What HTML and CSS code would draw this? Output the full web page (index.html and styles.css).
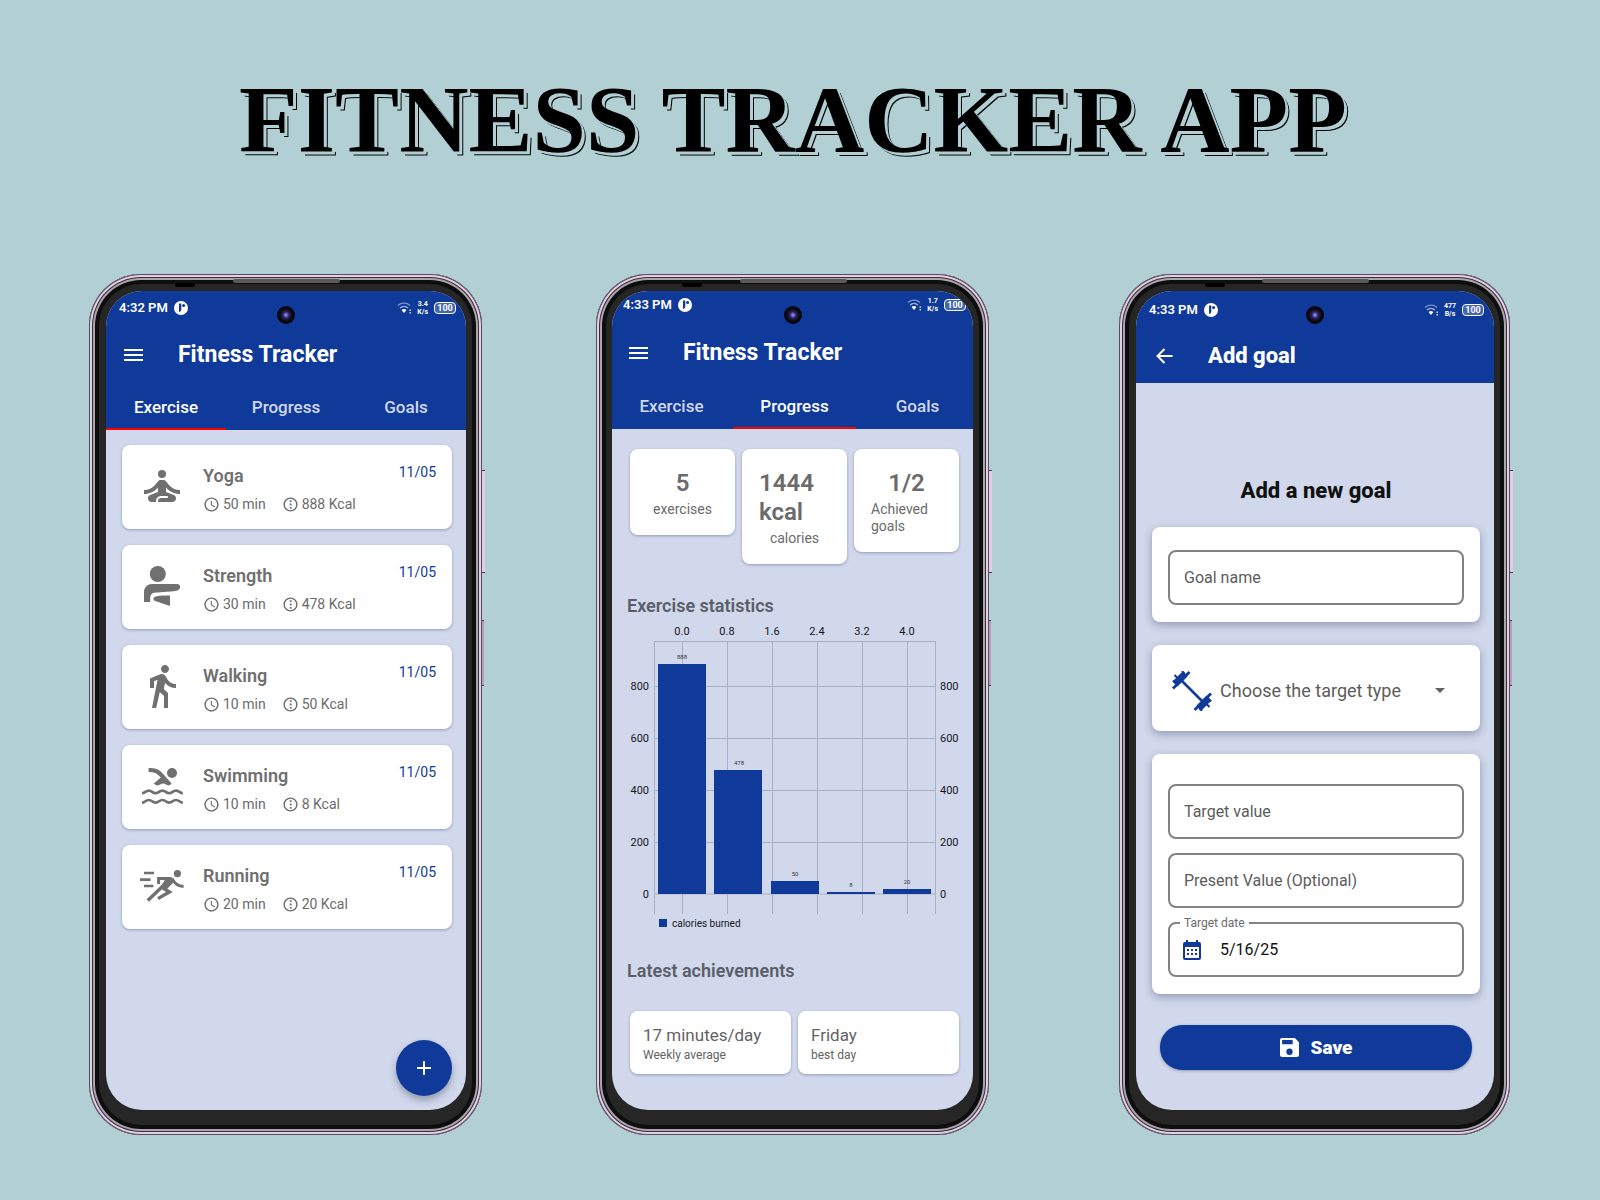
FILE: index.html
```html
<!DOCTYPE html>
<html lang="en">
<head>
<meta charset="utf-8">
<meta name="viewport" content="width=device-width, initial-scale=1">
<title>Fitness Tracker App</title>
<link rel="stylesheet" href="styles.css">
</head>
<body>
<svg class="sprite" aria-hidden="true">
  <symbol id="badge" viewBox="0 0 14 14"><circle cx="7" cy="7" r="7" fill="#fff"/><path d="M5 2.400h2.300v6.200A2.300 2.300 0 0 1 5 10.900z" fill="#103a9a"/><circle cx="9.600" cy="4.600" r="1.500" fill="#103a9a"/></symbol>
  <symbol id="wifi" viewBox="0 0 16 14"><g fill="none" stroke="#fff" stroke-width="1.3"><path d="M1 4.500a9 9 0 0 1 12 0" opacity=".45"/><path d="M3 7a6 6 0 0 1 8 0" opacity=".6"/></g><path d="M4.600 9a3.800 3.800 0 0 1 4.800 0L7 12z" fill="#fff"/><path d="M12.500 8.500h1.500v1.500h-1.500zM12.500 11h1.500v1.500h-1.500z" fill="#fff" opacity=".8"/></symbol>
  <symbol id="menu" viewBox="0 0 20 14"><path d="M0 1h19v2H0zM0 6h19v2H0zM0 11h19v2H0z" fill="#fff"/></symbol>
  <symbol id="clock" viewBox="0 0 24 24"><path fill="currentColor" d="M11.990 2C6.470 2 2 6.480 2 12s4.470 10 9.990 10C17.520 22 22 17.520 22 12S17.520 2 11.990 2zM12 20c-4.420 0-8-3.580-8-8s3.580-8 8-8 8 3.580 8 8-3.580 8-8 8zm.5-13H11v6l5.250 3.150.75-1.230-4.500-2.670z"/></symbol>
  <symbol id="energy" viewBox="0 0 24 24"><circle cx="12" cy="12" r="9" fill="none" stroke="currentColor" stroke-width="2"/><path fill="currentColor" d="M11 6h2.500v2.500H11zM11 10.700h2.500v2.600H11zM11 15.500h2.500V18H11z"/></symbol>
  <symbol id="yoga" viewBox="0 0 24 24"><circle cx="12" cy="6" r="2" fill="currentColor"/><path fill="currentColor" d="M21 16v-2c-2.240 0-4.160-.96-5.600-2.680l-1.340-1.600C13.680 9.260 13.120 9 12.530 9h-1.050c-.6 0-1.150.26-1.530.72l-1.340 1.600C7.160 13.040 5.240 14 3 14v2c2.770 0 5.190-1.170 7-3.250V15l-3.880 1.550C5.450 16.820 5 17.480 5 18.210 5 19.200 5.800 20 6.790 20H9v-.5c0-1.380 1.120-2.500 2.500-2.500h3c.28 0 .5.22.5.5s-.22.5-.5.5h-3c-.83 0-1.500.67-1.500 1.500v.5h7.100c.99 0 1.900-.8 1.900-1.790 0-.73-.45-1.390-1.120-1.660L14 15v-2.250c1.810 2.080 4.230 3.250 7 3.250z"/></symbol>
  <symbol id="strength" viewBox="0 0 24 24"><g fill="currentColor"><circle cx="9.900" cy="6" r="4"/><path d="M3 20v-5c0-2.300 1.800-4 4-4h12.500c2 0 2 2.700.3 3.200-1.500.4-8.800 1-10.800 1-2.200.1-2.900 1.300-2.900 3V20z"/><path d="M16 16.800V22l-7.700-2.600c-1-.7-.7-1.900.7-2.200 2-.4 5-.4 7-.4z"/></g></symbol>
  <symbol id="walking" viewBox="0 0 24 24"><path fill="currentColor" d="M13.500 5.500c1.100 0 2-.9 2-2s-.9-2-2-2-2 .9-2 2 .9 2 2 2zM9.800 8.900L7 23h2.100l1.800-8 2.100 2v6h2v-7.500l-2.100-2 .6-3C14.800 12 16.800 13 19 13v-2c-1.900 0-3.500-1-4.300-2.400l-1-1.600c-.4-.6-1-1-1.700-1-.3 0-.5.1-.8.1L6 8.300V13h2V9.600l1.800-.7"/></symbol>
  <symbol id="swimming" viewBox="0 0 24 24"><circle cx="17" cy="5.500" r="2.500" fill="currentColor"/><path fill="currentColor" d="M5.300 3c3.200 0 5 .6 6.500 2.100l5 5.700c-.6.700-1 .9-1.600.9-1 0-1.400-.9-2.600-.9s-1.700.9-2.800.9c-.8 0-1.400-.4-1.900-.9l3.500-3-1.200-1.200C9.100 5.500 7.800 5 5.300 5z"/><path fill="none" stroke="currentColor" stroke-width="1.300" d="M2 15.600c1.700 0 1.700-1.300 3.400-1.300s1.700 1.300 3.400 1.300 1.700-1.300 3.400-1.300 1.700 1.300 3.400 1.300 1.700-1.300 3.400-1.300 1.700 1.300 3.400 1.300M2 20.300c1.700 0 1.700-1.300 3.400-1.300s1.700 1.300 3.400 1.300 1.700-1.300 3.400-1.300 1.700 1.300 3.400 1.300 1.700-1.300 3.400-1.300 1.700 1.300 3.400 1.300"/></symbol>
  <symbol id="running" viewBox="0 0 24 24"><circle cx="19.700" cy="5.800" r="1.800" fill="currentColor"/><g fill="none" stroke="currentColor" stroke-width="1.300"><path d="M3 5.500h5M1 8.800h5.300M3 12h4.700"/><path stroke-width="1.500" d="M10.300 11V8.200h6.200M17 8.300c1.300 2.600 3 3.800 5.800 4"/><path stroke-width="1.700" d="M13.500 11L4.900 19.200M12.500 13l3.200 2-5.700 3.300"/></g><path fill="currentColor" d="M14.200 7.500h2.400l1.800 2-4.400 4.500-3-.8z"/></symbol>
</svg>

<header class="banner"><h1 class="banner-title">FITNESS TRACKER APP</h1></header>

<main class="showcase">
  <section class="phone" aria-label="Exercise screen">
    <span class="speaker"></span><span class="sensor"></span><span class="key key-volume"></span><span class="key key-power"></span>
    <div class="screen">
      <span class="camera"></span>
      <header class="app-head">
        <div class="status">
          <span class="time">4:32 PM</span><svg class="badge-icon"><use href="#badge"/></svg>
          <span class="signals"><svg class="wifi-icon"><use href="#wifi"/></svg><span class="rate">3.4<br>K/s</span><span class="battery">100</span></span>
        </div>
        <div class="toolbar"><button class="icon-button" aria-label="Menu"><svg class="menu-icon"><use href="#menu"/></svg></button><h2 class="app-title">Fitness Tracker</h2></div>
        <nav class="tabs"><a class="tab active" href="#exercise">Exercise</a><a class="tab" href="#progress">Progress</a><a class="tab" href="#goals">Goals</a></nav>
      </header>
      <ul class="workouts">
        <li class="card workout"><svg class="sport"><use href="#yoga"/></svg><div class="workout-body"><h3 class="workout-name">Yoga</h3><p class="facts"><svg class="fact-icon"><use href="#clock"/></svg><span class="duration">50 min</span><svg class="fact-icon"><use href="#energy"/></svg><span>888 Kcal</span></p></div><time class="day">11/05</time></li>
        <li class="card workout"><svg class="sport"><use href="#strength"/></svg><div class="workout-body"><h3 class="workout-name">Strength</h3><p class="facts"><svg class="fact-icon"><use href="#clock"/></svg><span class="duration">30 min</span><svg class="fact-icon"><use href="#energy"/></svg><span>478 Kcal</span></p></div><time class="day">11/05</time></li>
        <li class="card workout"><svg class="sport"><use href="#walking"/></svg><div class="workout-body"><h3 class="workout-name">Walking</h3><p class="facts"><svg class="fact-icon"><use href="#clock"/></svg><span class="duration">10 min</span><svg class="fact-icon"><use href="#energy"/></svg><span>50 Kcal</span></p></div><time class="day">11/05</time></li>
        <li class="card workout"><svg class="sport"><use href="#swimming"/></svg><div class="workout-body"><h3 class="workout-name">Swimming</h3><p class="facts"><svg class="fact-icon"><use href="#clock"/></svg><span class="duration">10 min</span><svg class="fact-icon"><use href="#energy"/></svg><span>8 Kcal</span></p></div><time class="day">11/05</time></li>
        <li class="card workout"><svg class="sport"><use href="#running"/></svg><div class="workout-body"><h3 class="workout-name">Running</h3><p class="facts"><svg class="fact-icon"><use href="#clock"/></svg><span class="duration">20 min</span><svg class="fact-icon"><use href="#energy"/></svg><span>20 Kcal</span></p></div><time class="day">11/05</time></li>
      </ul>
      <button class="fab" aria-label="Add exercise"><svg width="14" height="14" viewBox="0 0 14 14"><path d="M6 0h2v6h6v2H8v6H6V8H0V6h6z" fill="#fff"/></svg></button>
    </div>
  </section>

  <section class="phone phone-progress" aria-label="Progress screen">
    <span class="speaker"></span><span class="sensor"></span><span class="key key-volume"></span><span class="key key-power"></span>
    <div class="screen">
      <span class="camera"></span>
      <header class="app-head">
        <div class="status">
          <span class="time">4:33 PM</span><svg class="badge-icon"><use href="#badge"/></svg>
          <span class="signals"><svg class="wifi-icon"><use href="#wifi"/></svg><span class="rate">1.7<br>K/s</span><span class="battery">100</span></span>
        </div>
        <div class="toolbar"><button class="icon-button" aria-label="Menu"><svg class="menu-icon"><use href="#menu"/></svg></button><h2 class="app-title">Fitness Tracker</h2></div>
        <nav class="tabs"><a class="tab" href="#exercise">Exercise</a><a class="tab active" href="#progress">Progress</a><a class="tab" href="#goals">Goals</a></nav>
      </header>
      <div class="totals">
        <div class="card total"><strong class="total-value">5</strong><span class="total-label">exercises</span></div>
        <div class="card total"><strong class="total-value">1444 kcal</strong><span class="total-label">calories</span></div>
        <div class="card total"><strong class="total-value">1/2</strong><span class="total-label">Achieved goals</span></div>
      </div>
      <h3 class="section-title section-stats">Exercise statistics</h3>
      <svg class="chart" viewBox="0 0 361 317" role="img" aria-label="Calories burned per exercise">
        <path class="grid-line" d="M42 23.500H323M42 68.500H323M42 120.500H323M42 172.500H323M42 224.500H323M42 276H323M42.500 23V296M70.500 23V296M115.500 23V296M160.500 23V296M205.500 23V296M250.500 23V296M295.500 23V296M323.500 23V296"/>
        <path class="bar" d="M46 46h48v230H46zM102 152h48v124h-48zM159 263h48v13h-48zM215 274h48v2h-48zM271 271h48v5h-48z"/>
        <g class="axis-text mid"><text x="70" y="17">0.0</text><text x="115" y="17">0.8</text><text x="160" y="17">1.6</text><text x="205" y="17">2.4</text><text x="250" y="17">3.2</text><text x="295" y="17">4.0</text></g>
        <g class="axis-text end"><text x="37" y="72">800</text><text x="37" y="124">600</text><text x="37" y="176">400</text><text x="37" y="228">200</text><text x="37" y="280">0</text></g>
        <g class="axis-text"><text x="328" y="72">800</text><text x="328" y="124">600</text><text x="328" y="176">400</text><text x="328" y="228">200</text><text x="328" y="280">0</text></g>
        <g class="bar-text mid"><text x="70" y="41">888</text><text x="127" y="147">478</text><text x="183" y="258">50</text><text x="239" y="269">8</text><text x="295" y="266">20</text></g>
        <path class="bar" d="M47 301h8v8h-8z"/><text class="legend-text" x="60" y="309">calories burned</text>
      </svg>
      <h3 class="section-title section-latest">Latest achievements</h3>
      <div class="achievements">
        <div class="card achievement"><span class="achievement-value">17 minutes/day</span><span class="achievement-label">Weekly average</span></div>
        <div class="card achievement"><span class="achievement-value">Friday</span><span class="achievement-label">best day</span></div>
      </div>
    </div>
  </section>

  <section class="phone phone-goal" aria-label="Add goal screen">
    <span class="speaker"></span><span class="sensor"></span><span class="key key-volume"></span><span class="key key-power"></span>
    <div class="screen">
      <span class="camera"></span>
      <header class="app-head">
        <div class="status">
          <span class="time">4:33 PM</span><svg class="badge-icon"><use href="#badge"/></svg>
          <span class="signals"><svg class="wifi-icon"><use href="#wifi"/></svg><span class="rate">477<br>B/s</span><span class="battery">100</span></span>
        </div>
        <div class="toolbar"><button class="icon-button" aria-label="Back"><svg class="back-icon" viewBox="0 0 20 16"><path d="M18.500 8H4M10.500 1L3.500 8l7 7" fill="none" stroke="#fff" stroke-width="2"/></svg></button><h2 class="app-title">Add goal</h2></div>
      </header>
      <form class="goal-form">
        <h3 class="form-title">Add a new goal</h3>
        <div class="card field-card"><input class="field" type="text" placeholder="Goal name" aria-label="Goal name"></div>
        <div class="card type-card">
          <svg class="dumbbell" viewBox="0 0 40 40" aria-hidden="true"><g fill="none" stroke="#103a9a"><path stroke-width="2.500" d="M8 8l24 24"/><path stroke-width="2.800" d="M1 17.500L17.500 1M22.500 39L39 22.500"/><path stroke-width="7" d="M3 13L13 3M27 37L37 27"/><path stroke-width="2" d="M1 9.500l3 3M2.500 4l3 3M10 0l3 3M27 37l3 3M34.500 33l3 3M36 27.500l3 3"/></g></svg>
          <select class="type-select" aria-label="Target type"><option>Choose the target type</option></select>
          <svg class="caret" viewBox="0 0 10 5" aria-hidden="true"><path d="M0 0h10L5 5z" fill="#616161"/></svg>
        </div>
        <div class="card field-card field-stack">
          <input class="field" type="text" placeholder="Target value" aria-label="Target value">
          <input class="field" type="text" placeholder="Present Value (Optional)" aria-label="Present Value (Optional)">
          <div class="date-field">
            <label class="date-label" for="target-date">Target date</label>
            <svg class="calendar" viewBox="0 0 18 20" aria-hidden="true"><path fill="#103a9a" fill-rule="evenodd" d="M3 0h2v2h8V0h2v2h1a2 2 0 0 1 2 2v14a2 2 0 0 1-2 2H2a2 2 0 0 1-2-2V4a2 2 0 0 1 2-2h1zM2 7v11h14V7zM4 9h2v2H4zM8 9h2v2H8zM12 9h2v2h-2zM4 13h2v2H4zM8 13h2v2H8zM12 13h2v2h-2z"/></svg>
            <input class="date-input" id="target-date" type="text" value="5/16/25">
          </div>
        </div>
        <button class="save" type="button"><svg width="19" height="19" viewBox="0 0 18 18" aria-hidden="true"><path fill="#fff" fill-rule="evenodd" d="M2 0h12l4 4v12a2 2 0 0 1-2 2H2a2 2 0 0 1-2-2V2a2 2 0 0 1 2-2zM2 2v4h10V2zM9 10a3 3 0 1 0 0 6 3 3 0 0 0 0-6z"/></svg><span>Save</span></button>
      </form>
    </div>
  </section>
</main>
</body>
</html>
```
FILE: styles.css
```css
:root {
  --page: #b2d0d4;
  --blue: #103a9a;
  --surface: #d1d8eb;
  --grey: #6b6b6b;
}
* { box-sizing: border-box; }
body {
  margin: 0;
  min-height: 100vh;
  background: var(--page);
  font-family: Roboto, "Liberation Sans", sans-serif;
}
h1, h2, h3, p, ul { margin: 0; padding: 0; }
ul { list-style: none; }
button, input, select { font-family: inherit; }
.sprite { display: none; }

.banner { padding: 72px 14px 106px 0; text-align: center; }
.banner-title {
  font: bold 96px/96px "Liberation Serif", serif;
  color: #000;
  text-shadow: 1px 1px 0 var(--page), 2px 2px 0 var(--page), 3px 3px 0 var(--page), 4px 4px 0 #000;
}

.showcase {
  display: grid;
  grid-template-columns: 393fr 114fr 393fr 130fr 391fr;
  align-items: start;
  padding: 0 90px 64px 89px;
}

/* Phone body */
.phone {
  position: relative;
  grid-column: 1;
  padding: 17px 16px 25px 17px;
  border-radius: 52px;
  background: #262626;
  box-shadow:
    inset 0 0 0 1px #5b4a5e,
    inset 0 0 0 3px #e0d2e4,
    inset 0 0 0 4px #3a2d3c,
    inset 0 0 0 6px #aaa4ab,
    inset 0 0 0 10px #0e0e0e;
}
.phone-progress { grid-column: 3; padding-left: 16px; }
.phone-goal { grid-column: 5; }
.speaker {
  position: absolute;
  top: 5px;
  left: 50%;
  width: 107px;
  height: 4px;
  margin-left: -53px;
  border-radius: 2px;
  background: #5a585a;
}
.sensor {
  position: absolute;
  top: 9px;
  left: 86px;
  width: 20px;
  height: 4px;
  border-radius: 2px;
  background: #000;
}
.key {
  position: absolute;
  right: -3px;
  width: 3px;
  background: #e2cde8;
  border: solid #4a3a4c;
  border-width: 1px 0;
}
.key-volume { top: 196px; height: 103px; }
.key-power { top: 346px; height: 66px; width: 2px; right: -2px; background: #b79cbd; }
.screen {
  position: relative;
  display: flex;
  flex-direction: column;
  min-height: 819px;
  overflow: hidden;
  border-radius: 36px;
  background: var(--surface);
}
.camera {
  position: absolute;
  top: 15px;
  left: 50%;
  width: 18px;
  height: 18px;
  margin-left: -9px;
  border-radius: 50%;
  background: radial-gradient(circle, #8a78e0 0 1px, #2b2470 3px, #15152a 5px, #05050a 7px);
}

/* App header */
.app-head { background: var(--blue); color: #fff; }
.status { display: flex; align-items: center; height: 34px; padding: 0 10px 0 13px; }
.time { font-size: 13px; font-weight: 600; line-height: 16px; }
.badge-icon { width: 14px; height: 14px; margin-left: 6px; }
.signals { display: flex; align-items: center; margin-left: auto; }
.wifi-icon { width: 16px; height: 14px; }
.rate { margin: 0 6px 0 4px; font-size: 7px; font-weight: 700; line-height: 8px; text-align: center; }
.battery {
  width: 22px;
  height: 12px;
  border: 1px solid #fff;
  border-radius: 4px;
  background: #4565b0;
  font-size: 9px;
  font-weight: 700;
  line-height: 10px;
  text-align: center;
}
.toolbar { display: flex; align-items: center; height: 60px; padding-left: 18px; }
.icon-button { display: flex; width: 22px; margin-right: 32px; padding: 0; border: 0; background: none; }
.menu-icon { width: 20px; height: 14px; }
.back-icon { width: 20px; height: 16px; }
.app-title { font-size: 23px; font-weight: 700; line-height: 26px; }
.tabs { display: grid; grid-template-columns: repeat(3, 1fr); }
.tab {
  height: 45px;
  border-bottom: 2px solid transparent;
  color: #d0d8eb;
  font-size: 17px;
  font-weight: 500;
  line-height: 44px;
  text-align: center;
  text-decoration: none;
}
.tab.active { color: #fff; border-color: #f00; }

.card {
  border-radius: 8px;
  background: #fff;
  box-shadow: 0 1px 3px rgba(50, 65, 120, .4);
}

/* Exercise */
.workouts { display: grid; gap: 16px; padding: 15px 14px 0 16px; }
.workout { display: flex; height: 84px; padding: 0 16px; }
.sport { width: 48px; height: 48px; margin-top: 17px; color: #707070; }
.workout-body { flex: 1; padding: 20px 0 0 17px; }
.workout-name { color: #707070; font-size: 18px; font-weight: 600; line-height: 22px; }
.facts { display: flex; align-items: center; margin-top: 8px; color: var(--grey); font-size: 14px; line-height: 18px; }
.fact-icon { width: 17px; height: 17px; margin-right: 3px; }
.duration { margin-right: 16px; }
.day { margin-top: 18px; color: var(--blue); font-size: 14px; line-height: 18px; }
.fab {
  display: grid;
  place-items: center;
  width: 56px;
  height: 56px;
  margin: auto 14px 14px auto;
  border: 0;
  border-radius: 50%;
  background: var(--blue);
  box-shadow: 0 4px 7px rgba(50, 60, 90, .4);
}

/* Progress */
.phone-progress .status { height: 28px; padding: 0 7px 0 11px; }
.phone-progress .toolbar { height: 67px; padding-left: 17px; }
.phone-progress .tabs { margin: 0 -6px 0 -2px; }
.phone-progress .tab { height: 43px; line-height: 41px; }
.totals { display: grid; grid-template-columns: repeat(3, 1fr); align-items: start; gap: 7px; padding: 20px 14px 0 18px; }
.total { display: flex; flex-direction: column; align-items: center; gap: 3px; padding: 20px 17px 17px; color: var(--grey); }
.total-value { font-size: 24px; font-weight: 600; line-height: 29px; }
.total-label { font-size: 14px; line-height: 17px; }
.section-title { padding: 0 15px; color: #5a5e68; font-size: 18px; font-weight: 600; line-height: 24px; }
.section-stats { margin-top: 30px; }
.section-latest { margin-top: 24px; }
.chart { display: block; width: 100%; }
.grid-line { fill: none; stroke: #a9b0c2; stroke-width: 1; }
.bar { fill: var(--blue); }
.axis-text { fill: #15171c; font-size: 11px; }
.legend-text { fill: #15171c; font-size: 10px; }
.bar-text { fill: #33363c; font-size: 6px; }
.mid { text-anchor: middle; }
.end { text-anchor: end; }
.achievements { display: grid; grid-template-columns: 1fr 1fr; gap: 7px; padding: 28px 14px 0 18px; }
.achievement { display: grid; gap: 1px; padding: 13px 13px 11px; color: #636363; }
.achievement-value { font-size: 17px; line-height: 22px; }
.achievement-label { font-size: 12px; line-height: 16px; }

/* Add goal */
.phone-goal .status { height: 37px; }
.phone-goal .toolbar { height: 55px; }
.phone-goal .app-title { font-size: 22px; font-weight: 800; }
.phone-goal .card { box-shadow: 0 3px 8px rgba(50, 60, 100, .4); }
.goal-form { display: grid; gap: 23px; padding: 95px 14px 0 16px; }
.form-title { color: #111; font-size: 22px; font-weight: 800; line-height: 26px; text-align: center; }
.field-card { display: grid; padding: 23px 16px 17px; }
.field-stack { gap: 14px; padding-top: 30px; }
.field, .date-field {
  width: 100%;
  height: 55px;
  border: 2px solid #828282;
  border-radius: 8px;
  background: #fff;
}
.field { padding: 0 14px; color: #111; font-size: 16px; }
.field::placeholder { color: #5c5c5c; opacity: 1; }
.date-field { position: relative; display: flex; align-items: center; padding-left: 13px; }
.date-label {
  position: absolute;
  top: -9px;
  left: 10px;
  padding: 0 4px;
  background: #fff;
  color: #6b6b6b;
  font-size: 12px;
  line-height: 16px;
}
.calendar { width: 18px; height: 20px; margin-right: 19px; }
.date-input { flex: 1; min-width: 0; padding: 0; border: 0; background: none; color: #111; font-size: 16px; }
.type-card { display: flex; align-items: center; height: 86px; padding: 5px 35px 0 20px; }
.dumbbell { width: 40px; height: 40px; margin-right: 8px; }
.type-select {
  flex: 1;
  min-width: 0;
  padding: 0;
  border: 0;
  appearance: none;
  background: none;
  color: #5c5c5c;
  font-size: 18px;
}
.caret { width: 10px; height: 5px; }
.save {
  display: flex;
  align-items: center;
  justify-content: center;
  gap: 12px;
  height: 45px;
  margin: 8px 8px 0;
  padding: 0;
  border: 0;
  border-radius: 22px;
  background: var(--blue);
  box-shadow: 0 1px 3px rgba(50, 60, 90, .4);
  color: #fff;
  font-size: 19px;
  font-weight: 900;
}
```
